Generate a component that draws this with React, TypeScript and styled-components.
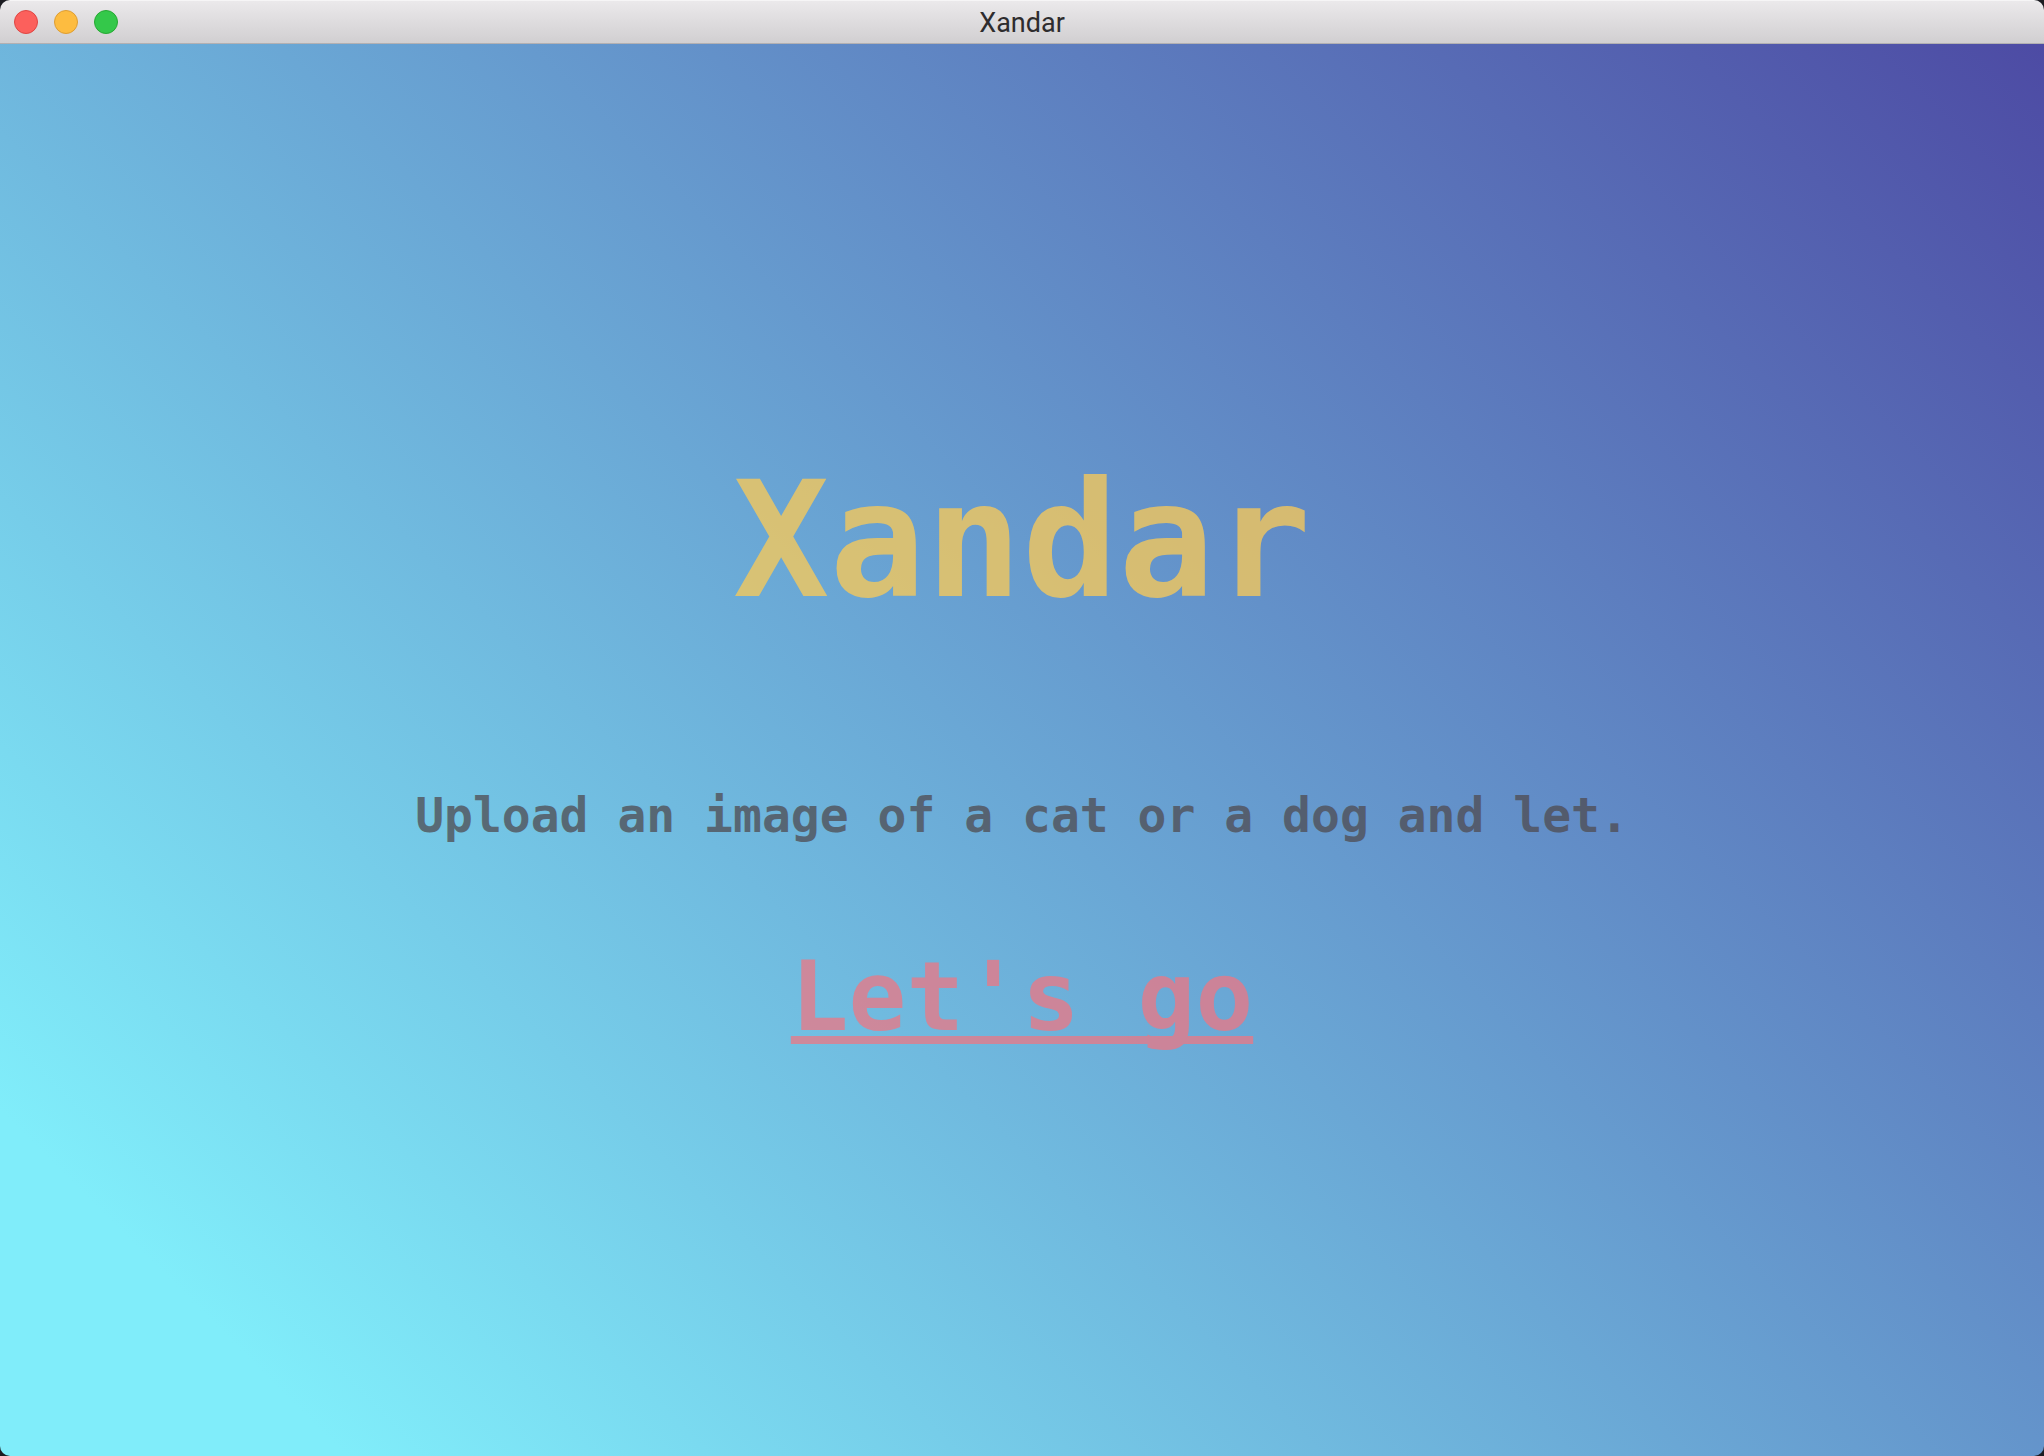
import React from "react";
import styled, { createGlobalStyle } from "styled-components";

const GlobalStyle = createGlobalStyle`
  * { box-sizing: border-box; }
  body { margin: 0; background: #1c1c22; }
`;

const AppWindow = styled.div`
  display: flex;
  flex-direction: column;
  min-height: 100vh;
  border-radius: 10px;
  overflow: hidden;
`;

const TitleBar = styled.header`
  display: grid;
  grid-template-columns: 1fr auto 1fr;
  align-items: center;
  height: 44px;
  padding: 0 14px;
  background: linear-gradient(#ebe9eb, #d1cfd1);
  border-top: 1px solid #f6f5f6;
  border-bottom: 1px solid #b2b0b2;
`;

const WindowControls = styled.div`
  display: flex;
  gap: 16px;
`;

const ControlButton = styled.button<{ $fill: string; $edge: string }>`
  width: 24px;
  height: 24px;
  padding: 0;
  border: 1px solid ${(p) => p.$edge};
  border-radius: 50%;
  background: ${(p) => p.$fill};
`;

const WindowTitle = styled.div`
  padding-top: 2px;
  color: #2e2c2e;
  font: 27px/32px Roboto, sans-serif;
`;

const Content = styled.main`
  flex: 1;
  display: flex;
  flex-direction: column;
  align-items: center;
  justify-content: center;
  background: linear-gradient(45deg, #80edfa 10%, #4d4ba4 100%);
  font-family: "DejaVu Sans Mono", monospace;
  font-weight: 700;
  text-align: center;
`;

const Heading = styled.h1`
  margin: 0 0 152px;
  color: #fdcb55;
  font-size: 160px;
  line-height: 188px;
  opacity: 0.75;
`;

const Tagline = styled.p`
  margin: 0 0 98px;
  color: #4f4b50;
  font-size: 48px;
  line-height: 56px;
  opacity: 0.75;
`;

const StartLink = styled.a`
  color: #ed7784;
  font-size: 96px;
  line-height: 112px;
  opacity: 0.75;
  text-decoration: underline;
  text-decoration-thickness: 8px;
  text-underline-offset: 6px;
  text-decoration-skip-ink: none;
`;

const controls = [
  { label: "Close", fill: "#fc605c", edge: "#de4643" },
  { label: "Minimize", fill: "#fdbc40", edge: "#dd9d33" },
  { label: "Zoom", fill: "#34c84a", edge: "#27a833" },
];

export default function App() {
  return (
    <>
      <GlobalStyle />
      <AppWindow>
        <TitleBar>
          <WindowControls>
            {controls.map((c) => (
              <ControlButton key={c.label} type="button" aria-label={c.label} $fill={c.fill} $edge={c.edge} />
            ))}
          </WindowControls>
          <WindowTitle>Xandar</WindowTitle>
        </TitleBar>
        <Content>
          <Heading>Xandar</Heading>
          <Tagline>Upload an image of a cat or a dog and let.</Tagline>
          <StartLink href="#start">Let's go</StartLink>
        </Content>
      </AppWindow>
    </>
  );
}
